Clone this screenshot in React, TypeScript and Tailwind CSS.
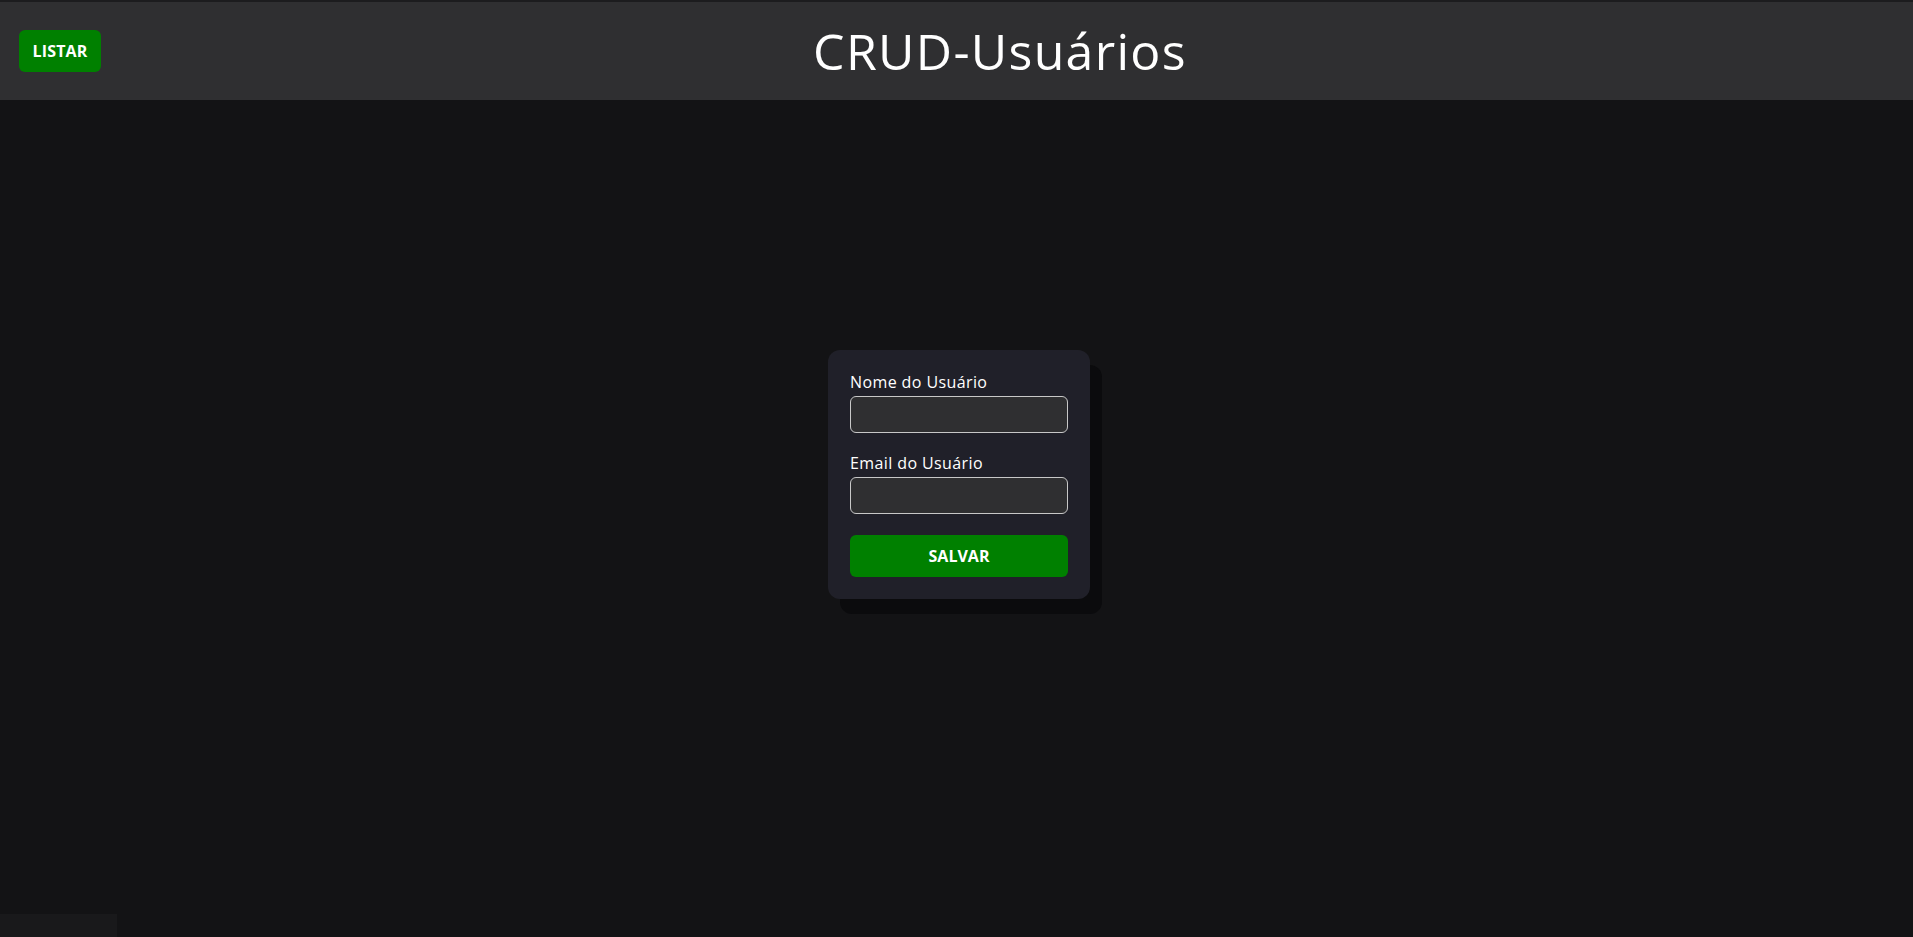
export default function App() {
  return (
    <div
      className="min-h-screen flex flex-col bg-[#131315] text-white"
      style={{ fontFamily: '"Open Sans", "Liberation Sans", sans-serif' }}
    >
      {/* header */}
      <header className="h-[100px] border-t-2 border-[#1c1c1e] bg-[#2f2f31] flex items-center pl-[19px] pr-[14px]">
        <button className="w-[82px] h-[42px] rounded-md bg-[#008000] text-white text-[16px] font-bold tracking-[0.2px]">
          LISTAR
        </button>
        <h1 className="flex-1 text-center text-[50px] font-normal leading-none tracking-[1.3px]">
          CRUD-Usuários
        </h1>
      </header>

      <main className="flex-1 flex items-center justify-center pb-[88px] pl-[5px]">
        <form className="w-[262px] rounded-xl bg-[#202029] p-[22px] flex flex-col shadow-[12px_15px_0_#0b0b0d]">
          <label className="text-[16px] leading-5 mb-1 tracking-[0.4px]">Nome do Usuário</label>
          <input className="h-[37px] rounded-md border border-[#c8c8c8] bg-[#2f2f31] px-2 text-white outline-none" />

          <label className="text-[16px] leading-5 mb-1 mt-5 tracking-[0.4px]">Email do Usuário</label>
          <input className="h-[37px] rounded-md border border-[#c8c8c8] bg-[#2f2f31] px-2 text-white outline-none" />

          <button
            type="button"
            className="mt-[21px] h-[42px] rounded-md bg-[#008000] text-white text-[16px] font-bold"
          >
            SALVAR
          </button>
        </form>
      </main>

      <div className="fixed left-0 bottom-0 w-[117px] h-[23px] bg-[#19191b]" />
    </div>
  );
}
